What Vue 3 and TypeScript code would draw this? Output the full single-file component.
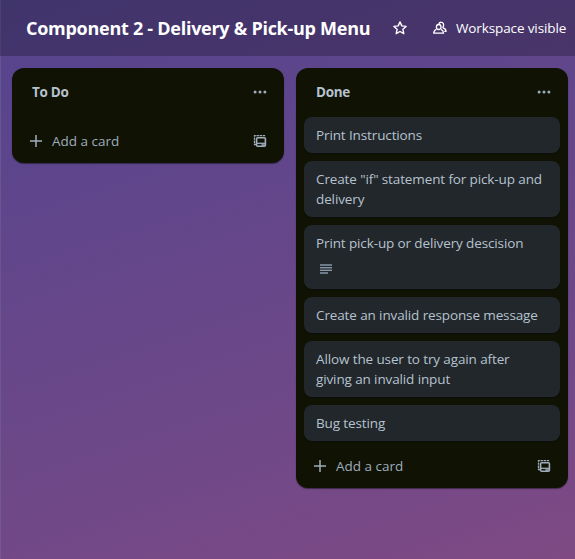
<script setup lang="ts">
interface Card {
  title: string
  described?: boolean
}

interface List {
  name: string
  cards: Card[]
}

const boardTitle = 'Component 2 - Delivery & Pick-up Menu'

const lists: List[] = [
  { name: 'To Do', cards: [] },
  {
    name: 'Done',
    cards: [
      { title: 'Print Instructions' },
      { title: 'Create "if" statement for pick-up and delivery' },
      { title: 'Print pick-up or delivery descision', described: true },
      { title: 'Create an invalid response message' },
      { title: 'Allow the user to try again after giving an invalid input' },
      { title: 'Bug testing' },
    ],
  },
]
</script>

<template>
  <div class="board">
    <header class="board-header">
      <h1 class="board-title">{{ boardTitle }}</h1>
      <button class="star" aria-label="Star board">
        <svg width="16" height="16" viewBox="0 0 16 16" fill="none" stroke="currentColor" stroke-width="1.4" stroke-linejoin="round">
          <path d="M8 1.9 9.8 5.9 14.1 6.4 10.9 9.3 11.8 13.6 8 11.5 4.2 13.6 5.1 9.3 1.9 6.4 6.2 5.9Z" />
        </svg>
      </button>
      <button class="visibility">
        <svg width="16" height="16" viewBox="0 0 16 16" fill="none" stroke="currentColor" stroke-width="1.3" stroke-linejoin="round">
          <ellipse cx="6.7" cy="7" rx="2.3" ry="2.5" />
          <path d="M4.4 9.4C2.7 10.1 1.8 11.3 1.7 13.2H11.6C11.5 11.3 10.6 10.1 9 9.4" />
          <path d="M6.8 4C7.3 2.7 8.4 2.1 9.5 2.3 11.2 2.6 11.9 4.1 11.5 6 11.3 7 10.8 7.7 10.8 7.7 12.7 8.3 13.9 9.6 14.1 11.3H12.3" />
        </svg>
        <span>Workspace visible</span>
      </button>
    </header>

    <main class="lists">
      <section v-for="list in lists" :key="list.name" class="list">
        <div class="list-header">
          <h2 class="list-name">{{ list.name }}</h2>
          <svg class="more" width="16" height="16" viewBox="0 0 16 16" fill="currentColor">
            <circle cx="3.1" cy="8" r="1.5" />
            <circle cx="8" cy="8" r="1.5" />
            <circle cx="12.9" cy="8" r="1.5" />
          </svg>
        </div>

        <ol class="cards" :class="{ filled: list.cards.length > 0 }">
          <li v-for="card in list.cards" :key="card.title" class="card">
            <span class="card-title">{{ card.title }}</span>
            <div v-if="card.described" class="badges">
              <svg width="12" height="10" viewBox="0 0 12 10" fill="currentColor">
                <path d="M0 0H12V2H0ZM0 8H8V10H0Z" opacity=".75" />
                <path d="M0 3H12V4H0ZM0 6H12V7H0Z" />
                <path d="M0 4H12V6H0Z" opacity=".4" />
              </svg>
            </div>
          </li>
        </ol>

        <div class="list-footer">
          <button class="add-card">
            <svg width="16" height="16" viewBox="0 0 16 16" fill="none" stroke="currentColor" stroke-width="1.5">
              <path d="M8 2V14M2 8H14" />
            </svg>
            <span>Add a card</span>
          </button>
          <svg class="template" width="16" height="16" viewBox="0 0 16 16" fill="none" stroke="currentColor">
            <path d="M4 11.5H2.5V2.6H12.5V4" stroke-width="1.3" stroke-dasharray="2.4 .7" />
            <rect x="4.6" y="4.7" width="8.8" height="8.5" rx="1" stroke-width="1.6" />
            <path d="M4.6 10.3H13.4" stroke-width="1.3" />
            <path d="M9.4 12H12.8" stroke-width="1.5" />
          </svg>
        </div>
      </section>
    </main>
  </div>
</template>

<style>
body {
  margin: 0;
  overflow: hidden;
}
</style>

<style scoped>
.board {
  box-sizing: border-box;
  width: 100%;
  height: 100vh;
  overflow: hidden;
  background: linear-gradient(162deg, #55458f 0%, #5c458c 20%, #6e4888 67%, #7f4a84 100%);
  box-shadow: inset 1px 0 rgba(130, 140, 160, 0.25);
  color: #b6c2cf;
  font-family: "Open Sans", "Noto Sans", sans-serif;
  font-size: 13.5px;
  line-height: 20px;
}

button {
  display: flex;
  align-items: center;
  padding: 0;
  border: 0;
  background: none;
  color: inherit;
  font: inherit;
  white-space: nowrap;
}

svg {
  display: block;
  flex: none;
}

.board-header {
  display: flex;
  align-items: center;
  box-sizing: border-box;
  height: 56px;
  padding-left: 26px;
  background: rgba(0, 0, 0, 0.24);
  color: #fff;
}

.board-title {
  width: 344px;
  margin: 0;
  font-size: 18px;
  font-weight: 700;
  line-height: 24px;
  letter-spacing: -0.27px;
  white-space: nowrap;
}

.star {
  margin-left: 22px;
}

.visibility {
  gap: 8px;
  margin-left: 24px;
  letter-spacing: -0.12px;
}

.lists {
  display: flex;
  align-items: flex-start;
  gap: 12px;
  padding: 12px;
}

.list {
  display: flex;
  flex: none;
  flex-direction: column;
  box-sizing: border-box;
  width: 272px;
  padding: 8px 8px 6px;
  border-radius: 12px;
  background: #101204;
  box-shadow: 0 1px 1px rgba(9, 12, 18, 0.5);
}

.list-header {
  display: flex;
  align-items: center;
  justify-content: space-between;
  height: 32px;
  padding: 0 8px 0 12px;
}

.list-name {
  margin: 0;
  font-size: 13.5px;
  font-weight: 700;
  line-height: 20px;
  letter-spacing: -0.3px;
}

.more,
.template {
  color: #9fadbc;
}

.cards {
  display: flex;
  flex-direction: column;
  gap: 8px;
  margin: 0;
  padding: 9px 0 8px;
  list-style: none;
}

.cards.filled {
  padding-bottom: 9px;
}

.card {
  padding: 8px 12px;
  border-radius: 8px;
  background: #22272b;
  box-shadow: 0 1px 1px rgba(9, 12, 18, 0.5);
}

.card-title {
  display: block;
  letter-spacing: -0.12px;
}

.badges {
  display: flex;
  align-items: center;
  height: 24px;
  padding: 4px 4px 0;
  color: #8696a7;
}

.list-footer {
  display: flex;
  align-items: center;
  justify-content: space-between;
  height: 32px;
  padding: 0 8px;
  color: #9fadbc;
}

.add-card {
  gap: 8px;
}
</style>
